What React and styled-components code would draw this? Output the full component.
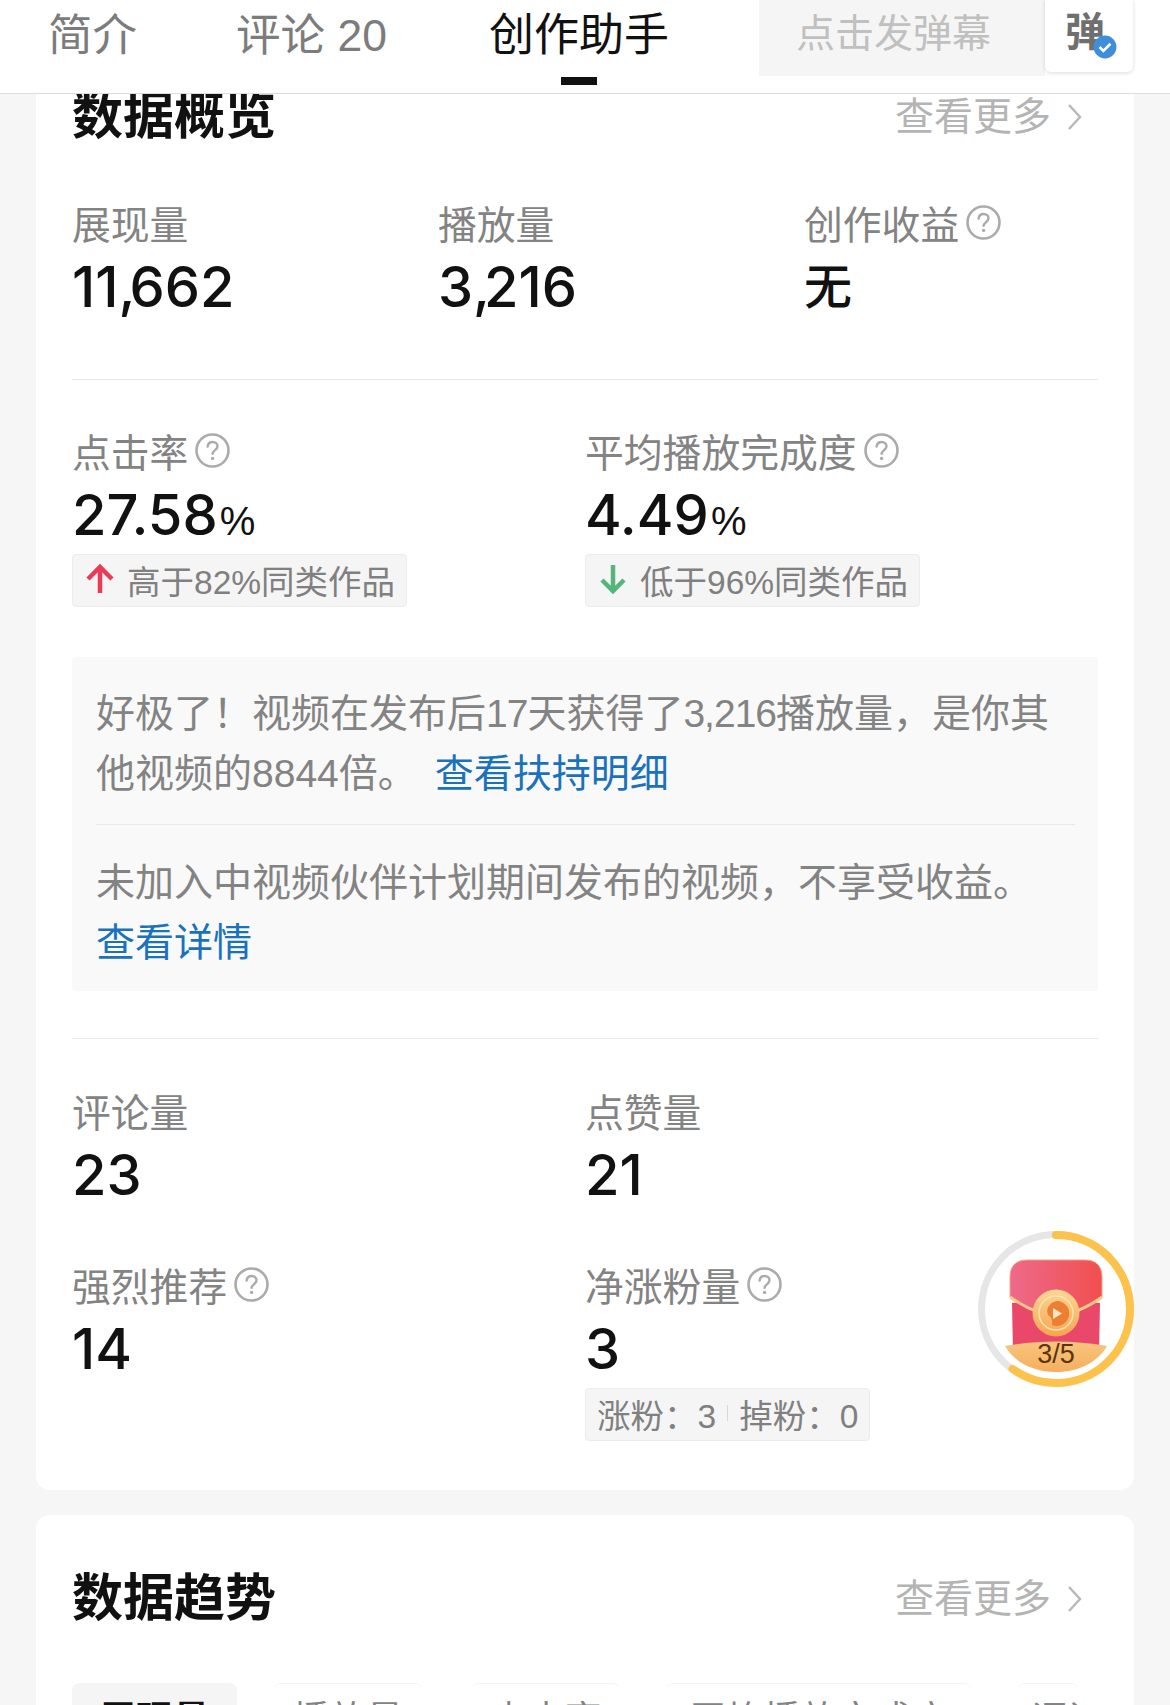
import React from "react"
import styled, { createGlobalStyle } from "styled-components"

const GlobalStyle = createGlobalStyle`
  html, body {
    margin: 0;
    padding: 0;
    background: #f6f6f6;
  }
  * {
    box-sizing: border-box;
  }
  body {
    font-family: "Liberation Sans", "Noto Sans CJK SC", sans-serif;
  }
`

const Page = styled.div`
  width: 1170px;
  height: 1705px;
  overflow: hidden;
  display: flex;
  flex-direction: column;
  background: #f6f6f6;
`

const Header = styled.header`
  height: 94px;
  flex: none;
  display: flex;
  align-items: flex-start;
  background: #fff;
  border-bottom: 1px solid #dcdcdc;
  padding-left: 48px;
  position: relative;
  z-index: 2;
`

const Tab = styled.div`
  position: relative;
  height: 93px;
  margin-right: ${(p) => p.$gap}px;
  padding-top: 9px;
  font-size: ${(p) => (p.$active ? 45 : 44.5)}px;
  line-height: 54px;
  white-space: nowrap;
  color: ${(p) => (p.$active ? "#111" : "#7c7c7c")};

  ${(p) =>
    p.$active &&
    `
    &::after {
      content: "";
      position: absolute;
      left: 72px;
      bottom: 8px;
      width: 36px;
      height: 8px;
      background: #111;
    }
  `}
`

const DanmuInput = styled.div`
  width: 286px;
  height: 76px;
  padding-left: 37px;
  background: #f5f5f5;
  color: #c0c0c0;
  font-size: 39px;
  line-height: 68px;
`

const DanmuButton = styled.div`
  position: relative;
  width: 88px;
  height: 72px;
  background: #fff;
  border-radius: 0 0 6px 6px;
  box-shadow: 0 1px 4px rgba(0, 0, 0, 0.14);
  color: #6f6f6f;
  font-size: 40px;
  font-weight: 700;
  line-height: 64px;
  padding-left: 20px;

  svg {
    position: absolute;
    left: 48px;
    top: 35px;
  }
`

const Scroll = styled.main`
  flex: 1;
  min-height: 0;
  overflow: hidden;
  padding: 0 36px;
`

const Card = styled.section`
  background: #fff;
  border-radius: ${(p) => (p.$flat ? "0 0 14px 14px" : "14px")};
  margin-top: ${(p) => (p.$flat ? "-2px" : "25px")};
  padding: 0 36px;
  height: ${(p) => p.$height}px;
`

const CardHead = styled.div`
  display: flex;
  justify-content: space-between;
  align-items: center;
  padding-top: ${(p) => p.$top}px;
  height: ${(p) => p.$height}px;
`

const CardTitle = styled.h2`
  margin: 0;
  font-size: 51px;
  font-weight: 700;
  line-height: 60px;
  color: #111;
`

const More = styled.div`
  display: flex;
  align-items: center;
  gap: 16px;
  padding-right: 16px;
  font-size: 39px;
  line-height: 50px;
  color: #b4b4b4;
`

const Row = styled.div`
  display: grid;
  grid-template-columns: ${(p) => p.$cols};
  padding-top: ${(p) => p.$top || 0}px;
`

const Metric = styled.div`
  min-height: ${(p) => p.$min || 0}px;
`

const Label = styled.div`
  display: flex;
  align-items: center;
  gap: 6px;
  height: 48px;
  font-size: 38.8px;
  color: #838383;
  white-space: nowrap;
`

const Value = styled.div`
  margin-top: 9px;
  height: 64px;
  font-family: Inter, "Noto Sans CJK SC", sans-serif;
  font-size: ${(p) => (p.$word ? 48 : 56)}px;
  font-weight: 500;
  line-height: 64px;
  color: #111;
`

const Comma = styled.span`
  letter-spacing: -6px;
`

const Percent = styled.span`
  font-family: "Liberation Sans", sans-serif;
  font-size: 40px;
  margin-left: 2px;
`

const Chip = styled.div`
  display: inline-flex;
  align-items: center;
  height: 53px;
  margin-top: 7px;
  padding: 0 11px 3px;
  gap: 11px;
  background: #f5f5f5;
  border: 1px solid #ececec;
  border-radius: 4px;
  font-size: 33.5px;
  color: #808080;
  white-space: nowrap;
`

const ChipDivider = styled.i`
  width: 1px;
  height: 16px;
  background: #d8d8d8;
`

const Rule = styled.hr`
  margin: ${(p) => p.$margin};
  border: 0;
  height: 1px;
  background: #e9e9e9;
`

const Notice = styled.div`
  margin-top: 50px;
  height: 334px;
  padding: 27px 23px 0 24px;
  background: #f9f9f9;
  border-radius: 4px;
  font-size: 39px;
  line-height: 60px;
  color: #838383;
`

const NoticeText = styled.p`
  margin: 0;
`

const NoticeNumber = styled.span`
  letter-spacing: -1px;
`

const NoticeLink = styled.span`
  margin-left: ${(p) => p.$indent || 0}px;
  color: #1a72bd;
`

const Trend = styled.div`
  display: flex;
  align-items: flex-start;
  margin-top: 2px;
  height: 40px;
  overflow: hidden;
`

const TrendTab = styled.div`
  flex: none;
  width: ${(p) => p.$width}px;
  margin-right: ${(p) => p.$gap}px;
  height: 60px;
  overflow: hidden;
  border-radius: 8px 8px 0 0;
  border-top: 1px solid #f4f4f4;
  background: ${(p) => (p.$active ? "#f5f5f5" : "#fff")};
  color: ${(p) => (p.$active ? "#111" : "#838383")};
  font-size: 37px;
  font-weight: ${(p) => (p.$active ? 700 : 400)};
  line-height: 60px;
  padding: 7px 0 0 ${(p) => p.$inset || 0}px;
  text-align: ${(p) => (p.$inset ? "left" : "center")};
  white-space: nowrap;
`

const Floating = styled.svg`
  position: absolute;
  left: 978px;
  top: 1231px;
  z-index: 1;
`

const Help = () => (
  <svg width="37" height="37" viewBox="0 0 37 37" fill="none">
    <circle cx="18.5" cy="18.5" r="16" stroke="#ababab" strokeWidth="2.6" />
    <path d="M13.6 14.6c.3-3 2.4-4.6 5-4.6 2.8 0 4.9 1.8 4.9 4.3 0 3.6-4.7 3.9-4.9 7.6" stroke="#ababab" strokeWidth="2.4" strokeLinecap="round" />
    <circle cx="18.6" cy="26.4" r="1.7" fill="#ababab" />
  </svg>
)

const Chevron = () => (
  <svg width="15" height="28" viewBox="0 0 15 28" fill="none">
    <path d="M2 2l11 12L2 26" stroke="#b8b8b8" strokeWidth="2.4" />
  </svg>
)

const UpArrow = () => (
  <svg width="32" height="32" viewBox="0 0 32 32" fill="none">
    <path d="M16 30V4M4 16L16 4l12 12" stroke="#ea3a58" strokeWidth="4.5" />
  </svg>
)

const DownArrow = () => (
  <svg width="32" height="32" viewBox="0 0 32 32" fill="none">
    <path d="M16 2v26M5 17l11 11 11-11" stroke="#55b67a" strokeWidth="4.5" />
  </svg>
)

const VerifiedBadge = () => (
  <svg width="24" height="24" viewBox="0 0 22 22">
    <circle cx="11" cy="11" r="10.5" fill="#3f8edb" />
    <path d="M6 11l3.5 3.5L16 8" fill="none" stroke="#fff" strokeWidth="2.4" />
  </svg>
)

const RedPacket = () => (
  <Floating width="156" height="156" viewBox="0 0 156 156">
    <defs>
      <linearGradient id="packetFlap" x1="0" x2="1" y1="0" y2="0">
        <stop offset="0" stopColor="#ee6a8b" />
        <stop offset="1" stopColor="#f14f4f" />
      </linearGradient>
      <linearGradient id="packetCoin" x1="0" x2="0" y1="0" y2="1">
        <stop offset="0" stopColor="#fbd796" />
        <stop offset="1" stopColor="#f7a550" />
      </linearGradient>
      <linearGradient id="packetBand" x1="0" x2="0" y1="0" y2="1">
        <stop offset="0" stopColor="#f8c67d" />
        <stop offset="1" stopColor="#f5ae5e" />
      </linearGradient>
    </defs>
    <circle cx="78" cy="78" r="74.5" fill="#fff" stroke="#e6e6e6" strokeWidth="7" />
    <circle
      cx="78"
      cy="78"
      r="74"
      fill="none"
      stroke="#fcc24c"
      strokeWidth="8"
      strokeLinecap="round"
      pathLength="100"
      strokeDasharray="60 100"
      transform="rotate(-90 78 78)"
    />
    <path d="M34 72l1 50h86l1-50-44-4z" fill="#e9486a" />
    <path d="M32 66V46c0-11 6-17 17-17h58c11 0 17 6 17 17v20c-14 10-30 18-46 18S46 76 32 66z" fill="url(#packetFlap)" stroke="#f8a27c" strokeWidth="1" />
    <path d="M32 66c14 10 30 18 46 18s32-8 46-18" fill="none" stroke="#fbc987" strokeWidth="3" />
    <path d="M27 115c16-3 34-4.5 51-4.5s35 1.5 51 4.5c-9 16-28 26-51 26s-42-10-51-26z" fill="url(#packetBand)" />
    <circle cx="78" cy="82" r="23.5" fill="url(#packetCoin)" />
    <circle cx="78" cy="82" r="17" fill="none" stroke="#fde3b2" strokeWidth="1.5" />
    <path d="M80 70a12.5 12.5 0 1 1-6 24c1-5-1-8-4-10-3-7 3-14 10-14z" fill="#ec7f32" />
    <path d="M75 77l9 5.5-9 5.5z" fill="#fde6c4" />
    <text x="78" y="132" textAnchor="middle" fontFamily="Liberation Sans" fontSize="27" fill="#5c3413">
      3/5
    </text>
  </Floating>
)

const App = () => {
  return (
    <Page>
      <GlobalStyle />
      <Header>
        <Tab $gap={99}>简介</Tab>
        <Tab $gap={102}>评论 20</Tab>
        <Tab $gap={90} $active>
          创作助手
        </Tab>
        <DanmuInput>点击发弹幕</DanmuInput>
        <DanmuButton>
          弹
          <VerifiedBadge />
        </DanmuButton>
      </Header>
      <Scroll>
        <Card $flat $height={1398}>
          <CardHead $top={0} $height={50}>
            <CardTitle>数据概览</CardTitle>
            <More>
              查看更多
              <Chevron />
            </More>
          </CardHead>
          <Row $cols="366px 366px 1fr" $top={56}>
            <Metric>
              <Label>展现量</Label>
              <Value>
                11<Comma>,</Comma>662
              </Value>
            </Metric>
            <Metric>
              <Label>播放量</Label>
              <Value>
                3<Comma>,</Comma>216
              </Value>
            </Metric>
            <Metric>
              <Label>
                创作收益
                <Help />
              </Label>
              <Value $word>无</Value>
            </Metric>
          </Row>
          <Rule $margin="60px 0 0" />
          <Row $cols="513px 1fr" $top={46}>
            <Metric>
              <Label>
                点击率
                <Help />
              </Label>
              <Value>
                27.58<Percent>%</Percent>
              </Value>
              <Chip>
                <UpArrow />
                高于82%同类作品
              </Chip>
            </Metric>
            <Metric>
              <Label>
                平均播放完成度
                <Help />
              </Label>
              <Value>
                4.49<Percent>%</Percent>
              </Value>
              <Chip>
                <DownArrow />
                低于96%同类作品
              </Chip>
            </Metric>
          </Row>
          <Notice>
            <NoticeText>
              好极了！视频在发布后<NoticeNumber>17</NoticeNumber>天获得了<NoticeNumber>3,216</NoticeNumber>播放量，是你其他视频的8844倍。
              <NoticeLink $indent={18}>查看扶持明细</NoticeLink>
            </NoticeText>
            <Rule $margin="20px 0 28px" />
            <NoticeText>
              未加入中视频伙伴计划期间发布的视频，不享受收益。
              <br />
              <NoticeLink>查看详情</NoticeLink>
            </NoticeText>
          </Notice>
          <Rule $margin="47px 0 0" />
          <Row $cols="513px 1fr" $top={47}>
            <Metric $min={174}>
              <Label>评论量</Label>
              <Value>23</Value>
            </Metric>
            <Metric $min={174}>
              <Label>点赞量</Label>
              <Value>21</Value>
            </Metric>
            <Metric>
              <Label>
                强烈推荐
                <Help />
              </Label>
              <Value>14</Value>
            </Metric>
            <Metric>
              <Label>
                净涨粉量
                <Help />
              </Label>
              <Value>3</Value>
              <Chip>
                涨粉：3<ChipDivider />掉粉：0
              </Chip>
            </Metric>
          </Row>
        </Card>
        <Card $height={400}>
          <CardHead $top={2} $height={166}>
            <CardTitle>数据趋势</CardTitle>
            <More>
              查看更多
              <Chevron />
            </More>
          </CardHead>
          <Trend>
            <TrendTab $active $width={165} $gap={36}>展现量</TrendTab>
            <TrendTab $width={150} $gap={48}>播放量</TrendTab>
            <TrendTab $width={150} $gap={45}>点击率</TrendTab>
            <TrendTab $width={306} $gap={45}>平均播放完成度</TrendTab>
            <TrendTab $width={62} $gap={0} $inset={14}>评论量</TrendTab>
          </Trend>
        </Card>
      </Scroll>
      <RedPacket />
    </Page>
  )
}

export default App
